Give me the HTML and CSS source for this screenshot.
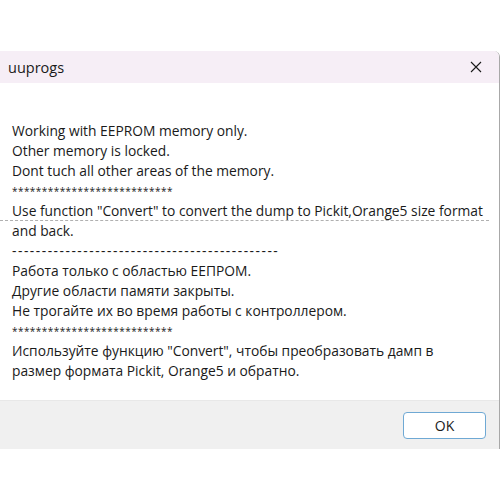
FILE: index.html
```html
<!DOCTYPE html>
<html lang="ru">
<head>
   <meta charset="UTF-8">
   <meta name="viewport" content="width=device-width, initial-scale=1.0">
   <title>uuprogs</title>
   <link rel="stylesheet" href="styles.css">
</head>
<body>
   <div class="dialog">
       <div class="title-bar">
           <span class="title">uuprogs</span>
           <button class="close-btn" aria-label="Close">
               <svg width="12" height="12" viewBox="0 0 12 12">
                   <path d="M1 1 L11 11 M11 1 L1 11" stroke="#1a1a1a" stroke-width="1.1" fill="none"/>
               </svg>
           </button>
       </div>

       <div class="message">
           <div class="line">Working with EEPROM memory only.</div>
           <div class="line">Other memory is locked.</div>
           <div class="line">Dont tuch all other areas of the memory.</div>
           <div class="line stars">***************************</div>
           <div class="line focus">Use function "Convert" to convert the dump to Pickit,Orange5 size format</div>
           <div class="line">and back.</div>
           <div class="line dashes">---------------------------------------------</div>
           <div class="line">Работа только с областью ЕЕПРОМ.</div>
           <div class="line">Другие области памяти закрыты.</div>
           <div class="line">Не трогайте их во время работы с контроллером.</div>
           <div class="line stars">***************************</div>
           <div class="line">Используйте функцию "Convert", чтобы преобразовать дамп в</div>
           <div class="line">размер формата Pickit, Orange5 и обратно.</div>
       </div>

       <div class="footer">
           <button class="btn">OK</button>
       </div>
   </div>
</body>
</html>
```

FILE: styles.css
```css
body {
    margin: 0;
    background: white;
    font-family: "Open Sans", "Noto Sans", sans-serif;
    color: #1a1a1a;
}
.dialog {
    margin-top: 51px;
    width: 500px;
    border-right: 1px solid #a8a8a8;
    box-sizing: border-box;
    border-top-right-radius: 6px;
    overflow: hidden;
}
.title-bar {
    height: 32px;
    background: #f6eef6;
    display: flex;
    align-items: center;
    justify-content: space-between;
    padding-left: 8px;
}
.title {
    font-size: 14.5px;
}
.close-btn {
    width: 46px;
    height: 32px;
    border: none;
    background: transparent;
    display: flex;
    align-items: center;
    justify-content: center;
    padding: 0;
}
.message {
    background: white;
    padding: 38px 0 19px 12px;
    font-size: 13.8px;
}
.line {
    height: 20px;
    line-height: 20px;
    white-space: nowrap;
}
.stars {
    font-size: 10px;
    letter-spacing: 0.45px;
}
.dashes {
    letter-spacing: 1.5px;
}
.focus {
    border-bottom: 1px dashed #b0b0b0;
    margin-left: -12px;
    padding-left: 12px;
    height: 19px;
    line-height: 20px;
    margin-right: 10px;
}
.footer {
    height: 49px;
    background: #f0f0f0;
    border-top: 1px solid #e8e8e8;
    box-sizing: border-box;
    display: flex;
    align-items: center;
    justify-content: flex-end;
    padding-right: 13px;
}
.btn {
    width: 83px;
    height: 27px;
    background: white;
    border: 1px solid #6fa9d4;
    border-radius: 4px;
    font-family: "Open Sans", sans-serif;
    font-size: 14px;
    color: #1a1a1a;
}
```
